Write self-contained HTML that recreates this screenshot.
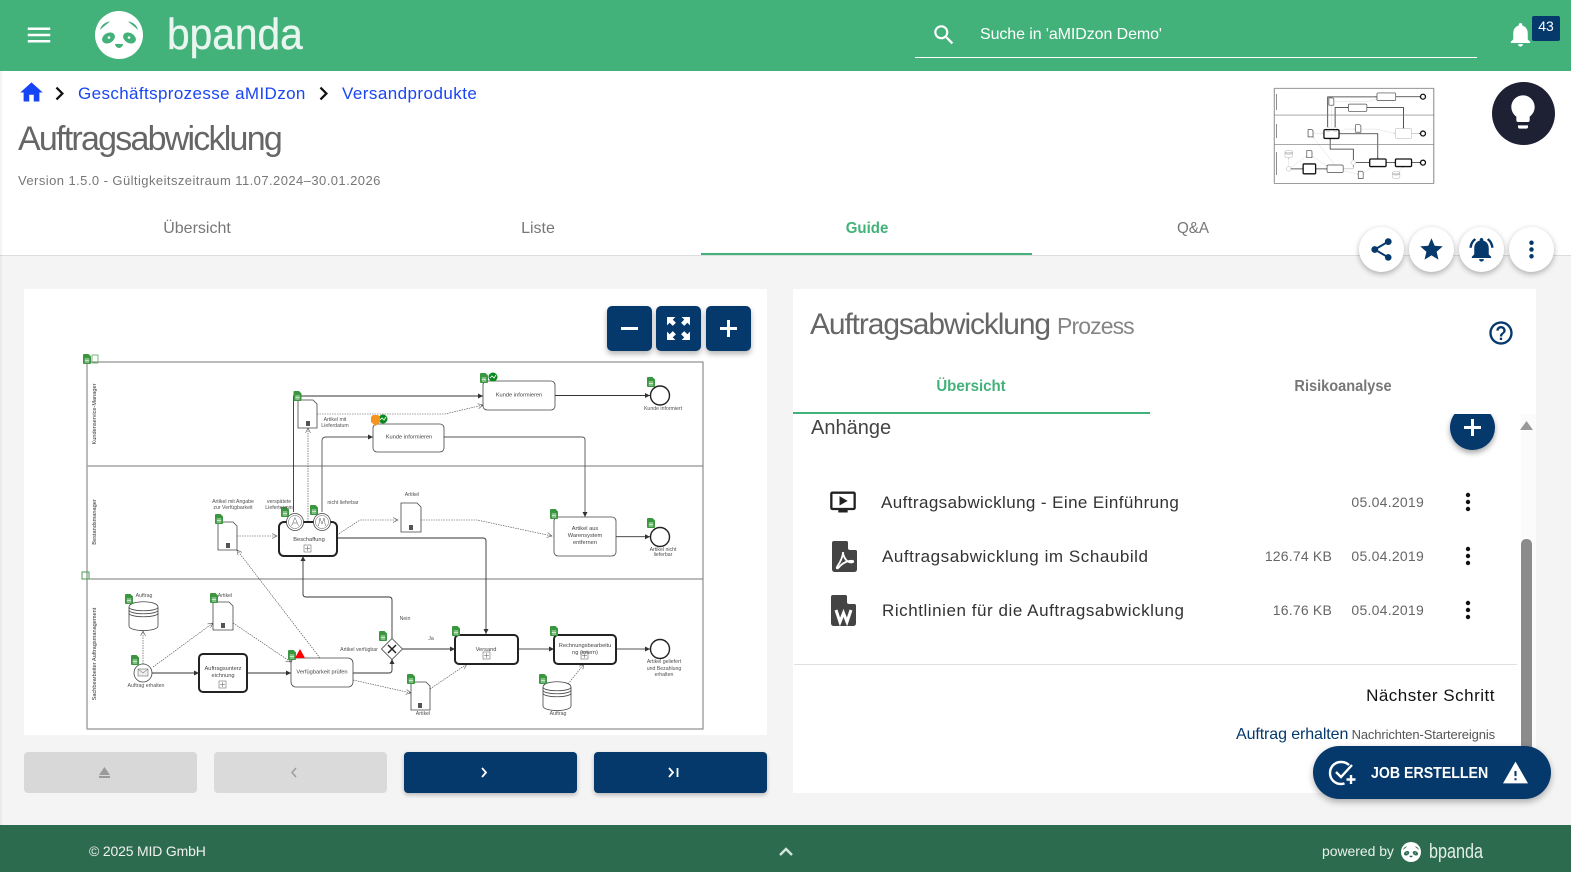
<!DOCTYPE html>
<html lang="de">
<head>
<meta charset="utf-8">
<title>Auftragsabwicklung</title>
<style>
html,body{margin:0;padding:0;width:1571px;height:872px;overflow:hidden;background:#f4f4f4;font-family:"Liberation Sans",sans-serif}
.a{position:absolute}
.t{position:absolute;white-space:nowrap}
.c{transform:translateX(-50%)}
.r{transform:translateX(-100%)}
svg{display:block}
.ic{position:absolute}
.navy{fill:#05386b}
.zb{position:absolute;top:306px;width:45px;height:45px;background:#05386b;border-radius:5px;box-shadow:0 3px 6px rgba(0,0,0,.3)}
.rb{position:absolute;top:227px;width:45px;height:45px;border-radius:50%;background:#fff;box-shadow:0 2px 6px rgba(0,0,0,.3)}
.nb{position:absolute;top:752px;width:173px;height:41px;border-radius:4px}
.row{font-size:17px;color:#333;line-height:22px}
.meta{font-size:14px;color:#666;line-height:20px}
#dg text{font-family:"Liberation Sans",sans-serif;font-size:5.2px;fill:#505050;text-anchor:middle}
#dg text.b{font-size:5.7px;fill:#444}
#dg text.l{font-size:5.6px;fill:#333}
.ns{vector-effect:non-scaling-stroke}
</style>
</head>
<body>
<svg width="0" height="0" style="position:absolute">
<defs>
<symbol id="panda" viewBox="0 0 48 48">
<circle cx="24" cy="24" r="24" fill="#fff"/>
<path d="M5 19C6 14 10 11 15 10.500 12 13 8 16 5 19ZM43 19C42 14 38 11 33 10.500 36 13 40 16 43 19Z" fill="currentColor"/>
<ellipse cx="13.500" cy="27" rx="6.800" ry="5" transform="rotate(-30 13.500 27)" fill="currentColor"/>
<ellipse cx="34.500" cy="27" rx="6.800" ry="5" transform="rotate(30 34.500 27)" fill="currentColor"/>
<circle cx="14" cy="26.500" r="1.300" fill="#fff"/><circle cx="34" cy="26.500" r="1.300" fill="#fff"/>
<path d="M20 33h8c0 2-2 4-4 4s-4-2-4-4z" fill="currentColor"/>
</symbol>
<symbol id="gd" viewBox="0 0 8 10">
<path d="M1 0H5.500L8 2.500V9Q8 10 7 10H1Q0 10 0 9V1Q0 0 1 0Z" fill="#3b973f"/>
<path d="M1.800 5H6.200M1.800 6.500H6.200M1.800 8H6.200" stroke="#fff" stroke-width=".8"/>
</symbol>
<marker id="ar" markerWidth="6" markerHeight="6" refX="5" refY="2.500" orient="auto" markerUnits="userSpaceOnUse"><path d="M0 0L5 2.500 0 5Z" fill="#333"/></marker>
<marker id="ao" markerWidth="6" markerHeight="6" refX="5" refY="2.500" orient="auto" markerUnits="userSpaceOnUse"><path d="M0 0L5 2.500 0 5" fill="none" stroke="#555" stroke-width=".6"/></marker>
<g id="shapes" fill="none" stroke="#333">
<rect x="87" y="362" width="616" height="367" stroke="#777" stroke-width="1"/>
<path d="M87 466H703M87 579H703" stroke="#777" stroke-width="1"/>
<path d="M87 362V729" stroke="#aaa" stroke-width="1.600"/>
<g stroke-width=".9" fill="none">
<path d="M293.500 512V396H483" marker-end="url(#ar)"/>
<path d="M322 512V441Q322 437 326 437H373" marker-end="url(#ar)" stroke="#555"/>
<path d="M555 395.500H650" marker-end="url(#ar)"/>
<path d="M444 437H582Q585 437 585 440V517" marker-end="url(#ar)" stroke="#555"/>
<path d="M616 536.700H650" marker-end="url(#ar)"/>
<path d="M337 538H483Q486 538 486 541V634" marker-end="url(#ar)"/>
<path d="M152 673H199" marker-end="url(#ar)"/>
<path d="M247 673H291" marker-end="url(#ar)"/>
<path d="M353 673H389Q392 673 392 670V659" marker-end="url(#ar)"/>
<path d="M392 639V600Q392 597 389 597H306Q303 597 303 594V556" marker-end="url(#ar)"/>
<path d="M402 649H455" marker-end="url(#ar)"/>
<path d="M518 649H554" marker-end="url(#ar)" stroke="#555"/>
<path d="M616 649H650" marker-end="url(#ar)" stroke="#555"/>
</g>
<g stroke-width=".6" stroke="#444" stroke-dasharray="1.500 1" fill="none">
<path d="M317 414H445L483 405" marker-end="url(#ao)"/>
<path d="M308 522V428" marker-end="url(#ao)"/>
<path d="M237 536H277" marker-end="url(#ao)"/>
<path d="M337 535L360 520H398" marker-end="url(#ao)"/>
<path d="M421 520H477L552 536" marker-end="url(#ao)"/>
<path d="M143 664V631" marker-end="url(#ao)"/>
<path d="M153 667L213 623" marker-end="url(#ao)"/>
<path d="M233 623L291 662" marker-end="url(#ao)"/>
<path d="M320 658L237 550" marker-end="url(#ao)"/>
<path d="M353 680L411 693" marker-end="url(#ao)"/>
<path d="M430 689L467 664" marker-end="url(#ao)"/>
<path d="M568 684L584 664" marker-end="url(#ao)"/>
</g>
<g fill="#fff" stroke="#444" stroke-width=".8">
<rect x="483" y="381" width="72" height="29" rx="4"/>
<rect x="373" y="424" width="71" height="28" rx="4"/>
<rect x="554" y="517" width="62" height="39" rx="4"/>
<rect x="291" y="658" width="62" height="29" rx="5"/>
</g>
<g fill="#fff" stroke="#222" stroke-width="2">
<rect x="279" y="522" width="58" height="34" rx="5"/>
<rect x="199" y="654" width="48" height="38" rx="4"/>
<rect x="455" y="635" width="63" height="29" rx="4"/>
<rect x="554" y="635" width="62" height="29" rx="4"/>
</g>
<g fill="#fff" stroke="#222" stroke-width="1.400">
<circle cx="660" cy="395.500" r="9.500"/><circle cx="660" cy="537" r="9.500"/><circle cx="660" cy="649" r="9.500"/>
</g>
<g fill="#fff" stroke="#444" stroke-width=".8">
<path id="d1" d="M298 400H313L317 404V428H298Z"/>
<path d="M218 522H233L237 526V550H218Z"/>
<path d="M401 503H417L421 507V532H401Z"/>
<path d="M213 602H229L233 606V630H213Z"/>
<path d="M411 682H426L430 686V710H411Z"/>
<circle cx="143" cy="673" r="9"/>
<path d="M392 638.500L402.500 649 392 659.500 381.500 649Z"/>
<circle cx="295" cy="522" r="8.500"/><circle cx="322" cy="522" r="8.500"/>
<path d="M129 607C129 600 158 600 158 607V626C158 632 129 632 129 626Z"/>
<path d="M129 607C129 612 158 612 158 607M129 610C129 615 158 615 158 610M129 613C129 618 158 618 158 613" fill="none"/>
<path d="M543 687C543 680 571 680 571 687V706C571 712 543 712 543 706Z"/>
<path d="M543 687C543 692 571 692 571 687M543 690C543 695 571 695 571 690M543 693C543 698 571 698 571 693" fill="none"/>
</g>
</g>
</defs>
</svg>

<!-- Header -->
<div class="a" style="left:0;top:0;width:1571px;height:71px;background:#43b27a"></div>
<svg class="ic" style="left:24px;top:21px" width="30" height="28" viewBox="0 0 24 22"><path d="M3 18h18v-2H3v2zm0-5h18v-2H3v2zm0-7v2h18V6H3z" fill="#fff" transform="translate(0 -1)"/></svg>
<svg class="ic" style="left:94.500px;top:11px;color:#43b27a" width="48" height="48"><use href="#panda"/></svg>
<div class="t" style="left:167px;top:10px;font-size:44px;line-height:50px;color:#e9f6ef;transform:scaleX(.925);transform-origin:0 0;-webkit-text-stroke:.4px #e9f6ef">bpanda</div>
<svg class="ic" style="left:931px;top:22px" width="26" height="26" viewBox="0 0 24 24"><path fill="#fff" d="M15.500 14h-.79l-.28-.27C15.410 12.590 16 11.110 16 9.500 16 5.910 13.090 3 9.500 3S3 5.910 3 9.500 5.910 16 9.500 16c1.610 0 3.090-.59 4.230-1.570l.27.28v.79l5 4.990L20.490 19l-4.990-5zm-6 0C7.010 14 5 11.990 5 9.500S7.010 5 9.500 5 14 7.010 14 9.500 11.990 14 9.500 14z"/></svg>
<div class="t" style="left:980px;top:25px;font-size:16px;line-height:20px;color:#fff;letter-spacing:-.09px">Suche in 'aMIDzon Demo'</div>
<div class="a" style="left:915px;top:57px;width:562px;height:1px;background:#fff"></div>
<svg class="ic" style="left:1506px;top:20px" width="29" height="29" viewBox="0 0 24 24"><path fill="#fff" d="M12 22c1.100 0 2-.9 2-2h-4c0 1.100.89 2 2 2zm6-6v-5c0-3.070-1.640-5.640-4.500-6.320V4c0-.83-.67-1.500-1.500-1.500s-1.500.67-1.500 1.500v.68C7.630 5.360 6 7.920 6 11v5l-2 2v1h16v-1l-2-2z"/></svg>
<div class="a" style="left:1532px;top:16px;width:28px;height:25px;background:#05386b;border-radius:2px;color:#fff;font-size:14px;line-height:21px;text-align:center">43</div>

<!-- Page head -->
<div class="a" style="left:0;top:71px;width:1571px;height:184px;background:#fff"></div>
<div class="a" style="left:0;top:255px;width:1571px;height:1px;background:#ddd"></div>
<svg class="ic" style="left:18px;top:79px" width="27" height="27" viewBox="0 0 24 24"><path fill="#1544f5" d="M10 20v-6h4v6h5v-8h3L12 3 2 12h3v8z"/></svg>
<svg class="ic" style="left:46px;top:80px" width="27" height="27" viewBox="0 0 24 24"><path fill="#111" d="M10 6L8.590 7.410 13.170 12l-4.580 4.590L10 18l6-6z"/></svg>
<div class="t" style="left:78px;top:83px;font-size:17px;line-height:22px;color:#1a46f2;letter-spacing:.38px">Geschäftsprozesse aMIDzon</div>
<svg class="ic" style="left:310px;top:80px" width="27" height="27" viewBox="0 0 24 24"><path fill="#111" d="M10 6L8.590 7.410 13.170 12l-4.580 4.590L10 18l6-6z"/></svg>
<div class="t" style="left:342px;top:83px;font-size:17px;line-height:22px;color:#1a46f2;letter-spacing:.45px">Versandprodukte</div>
<div class="t" style="left:18px;top:118px;font-size:34px;line-height:42px;color:#666;letter-spacing:-1.770px">Auftragsabwicklung</div>
<div class="t" style="left:18px;top:172px;font-size:13px;line-height:18px;color:#777;letter-spacing:.435px">Version 1.5.0 - Gültigkeitszeitraum 11.07.2024–30.01.2026</div>

<div class="t c" style="left:197px;top:219px;font-size:16px;line-height:20px;color:#777">Übersicht</div>
<div class="t c" style="left:538px;top:219px;font-size:16px;line-height:20px;color:#777">Liste</div>
<div class="t c" style="left:867px;top:219px;font-size:16px;line-height:20px;color:#43b27a;font-weight:bold;transform:translateX(-50%) scaleX(.94)">Guide</div>
<div class="t c" style="left:1193px;top:219px;font-size:16px;line-height:20px;color:#777;transform:translateX(-50%) scaleX(.95)">Q&amp;A</div>
<div class="a" style="left:701px;top:253px;width:331px;height:2px;background:#43b27a"></div>
<div class="a" style="left:0;top:71px;width:3px;height:754px;background:linear-gradient(90deg,rgba(0,0,0,.06),rgba(0,0,0,0))"></div>

<!-- Bulb -->
<div class="a" style="left:1491.500px;top:82px;width:63px;height:63px;border-radius:50%;background:#1e2033"></div>
<svg class="ic" style="left:1503px;top:92px" width="40" height="40" viewBox="0 0 24 24"><path fill="#fff" d="M9 21c0 .55.450 1 1 1h4c.55 0 1-.45 1-1v-1H9v1zm3-19C8.140 2 5 5.140 5 9c0 2.380 1.190 4.470 3 5.740V17c0 .55.450 1 1 1h6c.55 0 1-.45 1-1v-2.260c1.810-1.270 3-3.360 3-5.740 0-3.860-3.140-7-7-7z"/></svg>

<!-- Right round buttons -->
<div class="rb" style="left:1359px"><svg style="margin:9px" width="27" height="27" viewBox="0 0 24 24"><path class="navy" d="M18 16.080c-.76 0-1.440.3-1.960.77L8.910 12.700c.05-.23.09-.46.09-.7s-.04-.47-.09-.7l7.050-4.110c.54.5 1.250.81 2.040.81 1.660 0 3-1.340 3-3s-1.340-3-3-3-3 1.340-3 3c0 .24.04.47.09.7L8.040 9.810C7.500 9.310 6.790 9 6 9c-1.660 0-3 1.340-3 3s1.340 3 3 3c.79 0 1.500-.31 2.040-.81l7.120 4.160c-.05.21-.08.43-.08.65 0 1.610 1.310 2.920 2.920 2.920 1.610 0 2.920-1.310 2.920-2.920s-1.310-2.920-2.920-2.920z"/></svg></div>
<div class="rb" style="left:1409px"><svg style="margin:9px" width="27" height="27" viewBox="0 0 24 24"><path class="navy" d="M12 17.270L18.180 21l-1.640-7.030L22 9.240l-7.190-.61L12 2 9.190 8.630 2 9.240l5.460 4.730L5.820 21z"/></svg></div>
<div class="rb" style="left:1459px"><svg style="margin:8px" width="29" height="29" viewBox="0 0 24 24"><path class="navy" d="M7.580 4.080L6.150 2.650C3.750 4.480 2.170 7.300 2.030 10.500h2c.15-2.650 1.510-4.970 3.550-6.420zm12.390 6.420h2c-.15-3.200-1.730-6.020-4.120-7.850l-1.420 1.430c2.020 1.450 3.390 3.770 3.540 6.420zM18 11c0-3.070-1.640-5.640-4.500-6.320V4c0-.83-.67-1.500-1.500-1.500s-1.500.67-1.500 1.500v.68C7.630 5.360 6 7.920 6 11v5l-2 2v1h16v-1l-2-2v-5zm-6 11c.14 0 .27-.01.4-.04.65-.14 1.180-.58 1.440-1.180.1-.24.15-.5.15-.78h-4c.01 1.100.9 2 2.010 2z"/></svg></div>
<div class="rb" style="left:1509px"><svg style="margin:9px" width="27" height="27" viewBox="0 0 24 24"><path class="navy" d="M12 8c1.100 0 2-.9 2-2s-.9-2-2-2-2 .9-2 2 .9 2 2 2zm0 2c-1.100 0-2 .9-2 2s.9 2 2 2 2-.9 2-2-.9-2-2-2zm0 6c-1.100 0-2 .9-2 2s.9 2 2 2 2-.9 2-2-.9-2-2-2z"/></svg></div>

<!-- Panels -->
<div class="a" style="left:24px;top:289px;width:743px;height:446px;background:#fff"></div>
<div class="a" style="left:793px;top:289px;width:743px;height:504px;background:#fff"></div>

<!-- Diagram + thumbnail -->
<svg id="dg" class="a" style="left:0;top:0" width="1571" height="872" viewBox="0 0 1571 872">
<use href="#shapes"/>
<g fill="#fff" stroke="#555" stroke-width=".5">
<circle cx="295" cy="522" r="6.500"/><circle cx="322" cy="522" r="6.500"/>
<path d="M291.500 526L295 517.500 298.500 526M293 523H297M318.500 526L320 518 322 524 324 518 325.500 526" fill="none"/>
<rect x="138" y="669" width="10" height="7" fill="#eee"/>
<path d="M138 669L143 673 148 669" fill="none"/>
<rect x="304" y="545" width="7" height="7"/><path d="M307.500 546V551M305 548.500H310"/>
<rect x="219" y="681" width="7" height="7"/><path d="M222.500 682V687M220 684.500H225"/>
<rect x="483" y="652" width="7" height="7"/><path d="M486.500 653V658M484 655.500H489"/>
<rect x="581" y="652" width="7" height="7"/><path d="M584.500 653V658M582 655.500H587"/>
</g>
<path d="M388 645L396 653M396 645L388 653" stroke="#222" stroke-width="1.500"/>
<g fill="#555"><rect x="306" y="421" width="4" height="5"/><rect x="226" y="543" width="4" height="5"/><rect x="409" y="525" width="4" height="5"/><rect x="221" y="623" width="4" height="5"/><rect x="418" y="703" width="4" height="5"/></g>
<g>
<use href="#gd" x="83" y="354" width="8" height="10"/>
<use href="#gd" x="293.500" y="391" width="8" height="10"/>
<use href="#gd" x="480" y="373" width="8" height="10"/>
<use href="#gd" x="647" y="377" width="8" height="10"/>
<use href="#gd" x="550" y="509" width="8" height="10"/>
<use href="#gd" x="647" y="518" width="8" height="10"/>
<use href="#gd" x="281" y="507" width="8" height="10"/>
<use href="#gd" x="215" y="514" width="8" height="10"/>
<use href="#gd" x="310" y="505" width="8" height="10"/>
<use href="#gd" x="125" y="594" width="8" height="10"/>
<use href="#gd" x="210" y="593" width="8" height="10"/>
<use href="#gd" x="131" y="655" width="8" height="10"/>
<use href="#gd" x="288" y="650" width="8" height="10"/>
<use href="#gd" x="379" y="631" width="8" height="10"/>
<use href="#gd" x="452" y="626" width="8" height="10"/>
<use href="#gd" x="550" y="626" width="8" height="10"/>
<use href="#gd" x="407" y="674" width="8" height="10"/>
<use href="#gd" x="539" y="674" width="8" height="10"/>
</g>
<path d="M92 355H98V363H92Z" fill="none" stroke="#7bb97e" stroke-width="1"/>
<path d="M82 572H89V579H82Z" fill="none" stroke="#4a9c4e" stroke-width="1"/>
<circle cx="493" cy="377" r="4.500" fill="#0a8a1e"/><path d="M490 378L492 376 494 378 496 375" stroke="#fff" stroke-width=".8" fill="none"/>
<circle cx="383" cy="419" r="4.500" fill="#0a8a1e"/><path d="M380 420L382 418 384 420 386 417" stroke="#fff" stroke-width=".8" fill="none"/>
<path d="M373 415H378L380 417V422L375.500 426 371 422V417Z" fill="#f7941d"/>
<path d="M300 649L305 658H295Z" fill="#f00"/>
<text class="b" x="519" y="396.500">Kunde informieren</text>
<text class="b" x="409" y="438.500">Kunde informieren</text>
<text x="663" y="410">Kunde informiert</text>
<text x="335" y="421">Artikel mit</text><text x="335" y="427">Lieferdatum</text>
<text x="233" y="503">Artikel mit Angabe</text><text x="233" y="509">zur Verfügbarkeit</text>
<text x="279" y="503">verspätete</text><text x="279" y="509">Liefertermin</text>
<text x="343" y="504">nicht lieferbar</text>
<text x="412" y="496">Artikel</text>
<text class="b" x="309" y="541">Beschaffung</text>
<text class="b" x="585" y="530">Artikel aus</text><text class="b" x="585" y="537">Warensystem</text><text class="b" x="585" y="544">entfernen</text>
<text x="663" y="551">Artikel nicht</text><text x="663" y="556">lieferbar</text>
<text x="144" y="597">Auftrag</text><text x="225" y="597">Artikel</text>
<text x="146" y="687">Auftrag erhalten</text>
<text class="b" x="223" y="670">Auftragsunterz</text><text class="b" x="223" y="677">eichnung</text>
<text class="b" x="322" y="673.500">Verfügbarkeit prüfen</text>
<text x="359" y="651">Artikel verfügbar</text>
<text x="405" y="620">Nein</text><text x="431" y="640">Ja</text>
<text class="b" x="486" y="651">Versand</text>
<text class="b" x="585" y="647">Rechnungsbearbeitu</text><text class="b" x="585" y="654">ng (intern)</text>
<text x="664" y="663">Artikel geliefert</text><text x="664" y="670">und Bezahlung</text><text x="664" y="676">erhalten</text>
<text x="423" y="715">Artikel</text><text x="558" y="715">Auftrag</text>
<text class="l" transform="translate(96 414) rotate(-90)">Kundenservice-Manager</text>
<text class="l" transform="translate(96 522) rotate(-90)">Bestandsmanager</text>
<text class="l" transform="translate(96 654) rotate(-90)">Sachbearbeiter Auftragsmanagement</text>
<!-- thumbnail -->
<rect x="1274.500" y="88.500" width="159" height="95" fill="#fff" stroke="#aaa"/>
<g transform="translate(1251.400 -6.100) scale(.26)"><use href="#shapes"/>
<g fill="none" stroke="#333" stroke-width=".8">
<path class="ns" d="M293.500 512V396H483M322 512V437H373M555 395.500H650M444 437H585V517M337 538H486V634M152 673H199M247 673H291M392 639V597H303V556M402 649H455M518 649H554M616 649H650"/>
<path class="ns" d="M87 466H703M87 579H703" stroke="#888" stroke-width=".7"/>
</g>
<g fill="none" stroke="#111" stroke-width="1.300">
<rect class="ns" x="279" y="522" width="58" height="34" rx="5"/>
<rect class="ns" x="199" y="654" width="48" height="38" rx="4"/>
<rect class="ns" x="455" y="635" width="63" height="29" rx="4"/>
<rect class="ns" x="554" y="635" width="62" height="29" rx="4"/>
<circle class="ns" cx="660" cy="395.500" r="9.500"/><circle class="ns" cx="660" cy="537" r="9.500"/><circle class="ns" cx="660" cy="649" r="9.500"/>
</g>
<g fill="none" stroke="#555" stroke-width=".7">
<rect class="ns" x="483" y="381" width="72" height="29" rx="4"/>
<rect class="ns" x="373" y="424" width="71" height="28" rx="4"/>
<rect class="ns" x="291" y="658" width="62" height="29" rx="5"/>
<path class="ns" d="M298 400H313L317 404V428H298ZM218 522H233L237 526V550H218ZM401 503H417L421 507V532H401ZM213 602H229L233 606V630H213ZM411 682H426L430 686V710H411Z"/>
</g>
</g>
<path d="M1276.500 94V110M1276.500 124V138M1276.500 152V175" stroke="#444" stroke-width=".6"/>
</svg>

<!-- Zoom buttons -->
<div class="zb" style="left:607px"><div class="a" style="left:14px;top:21px;width:17px;height:3px;background:#fff"></div></div>
<div class="zb" style="left:656px"><svg style="margin:10px" width="25" height="25" viewBox="0 0 24 24"><path fill="#fff" d="M1 1H9L6.500 3.500 9.500 6.500 6.500 9.500 3.500 6.500 1 9ZM23 1V9L20.500 6.500 17.500 9.500 14.500 6.500 17.500 3.500 15 1ZM1 23V15L3.500 17.500 6.500 14.500 9.500 17.500 6.500 20.500 9 23ZM23 23H15L17.500 20.500 14.500 17.500 17.500 14.500 20.500 17.500 23 15Z"/></svg></div>
<div class="zb" style="left:706px"><div class="a" style="left:14px;top:21px;width:17px;height:3px;background:#fff"></div><div class="a" style="left:21px;top:14px;width:3px;height:17px;background:#fff"></div></div>

<!-- Nav buttons -->
<div class="nb" style="left:24px;background:#d8d8d8"><svg class="a" style="left:74px;top:14px" width="13" height="13" viewBox="0 0 13 13"><path fill="#9a9a9a" d="M6.500 1L12 9H1ZM1 10H12V12H1Z"/></svg></div>
<div class="nb" style="left:214px;background:#dadada"><svg class="a" style="left:75px;top:14px" width="10" height="13" viewBox="0 0 10 13"><path fill="none" stroke="#999" stroke-width="1.400" d="M7 2L3 6.500 7 11"/></svg></div>
<div class="nb" style="left:404px;background:#05386b;box-shadow:0 2px 4px rgba(0,0,0,.25)"><svg class="a" style="left:75px;top:14px" width="10" height="13" viewBox="0 0 10 13"><path fill="none" stroke="#fff" stroke-width="1.800" d="M3 2L7 6.500 3 11"/></svg></div>
<div class="nb" style="left:594px;background:#05386b;box-shadow:0 2px 4px rgba(0,0,0,.25)"><svg class="a" style="left:73px;top:14px" width="14" height="13" viewBox="0 0 14 13"><path fill="none" stroke="#fff" stroke-width="1.800" d="M2 2L6 6.500 2 11M10.500 2V11"/></svg></div>

<!-- Right panel content -->
<div class="t" style="left:810px;top:306px;font-size:30px;line-height:38px;color:#666;letter-spacing:-1.120px">Auftragsabwicklung</div>
<div class="t" style="left:1057px;top:311px;font-size:23px;line-height:30px;color:#858585;letter-spacing:-.9px">Prozess</div>
<svg class="ic" style="left:1487px;top:319px" width="28" height="28" viewBox="0 0 24 24"><path class="navy" d="M11 18h2v-2h-2v2zm1-16C6.480 2 2 6.480 2 12s4.480 10 10 10 10-4.480 10-10S17.520 2 12 2zm0 18c-4.410 0-8-3.590-8-8s3.590-8 8-8 8 3.590 8 8-3.590 8-8 8zm0-14c-2.210 0-4 1.790-4 4h2c0-1.100.9-2 2-2s2 .9 2 2c0 2-3 1.750-3 5h2c0-2.250 3-2.500 3-5 0-2.210-1.790-4-4-4z"/></svg>
<div class="t c" style="left:971px;top:377px;font-size:16px;line-height:20px;color:#43b27a;font-weight:bold;transform:translateX(-50%) scaleX(.94)">Übersicht</div>
<div class="t c" style="left:1343px;top:377px;font-size:16px;line-height:20px;color:#777;font-weight:bold;transform:translateX(-50%) scaleX(.91)">Risikoanalyse</div>
<div class="a" style="left:793px;top:412px;width:357px;height:2px;background:#43b27a"></div>

<!-- scroll area clip -->
<div class="a" style="left:794px;top:414px;width:742px;height:379px;overflow:hidden">
  <div class="a" style="left:656px;top:-9.500px;width:45px;height:45px;border-radius:50%;background:#05386b;box-shadow:0 3px 6px rgba(0,0,0,.35)"></div>
  <div class="a" style="left:670px;top:11.500px;width:17px;height:3px;background:#fff"></div>
  <div class="a" style="left:677px;top:4.500px;width:3px;height:17px;background:#fff"></div>
</div>
<div class="a" style="left:1521px;top:414px;width:15px;height:379px;background:#fbfbfb"></div>
<svg class="ic" style="left:1519px;top:420px" width="15" height="11" viewBox="0 0 15 11"><path d="M7.500 1L14 10H1Z" fill="#999"/></svg>
<div class="a" style="left:1521px;top:539px;width:11px;height:220px;border-radius:5px 5px 0 0;background:#8b8b8b"></div>

<div class="t" style="left:811px;top:416px;font-size:20px;line-height:24px;color:#444">Anhänge</div>

<svg class="ic" style="left:829px;top:488px" width="28" height="28" viewBox="0 0 24 24"><path fill="#222" d="M21 3H3c-1.110 0-2 .89-2 2v12c0 1.100.89 2 2 2h5v2h8v-2h5c1.100 0 1.990-.9 1.990-2L23 5c0-1.110-.9-2-2-2zm0 14H3V5h18v12zM16 11l-7 4V7z"/></svg>
<div class="t row" style="left:881px;top:492px;letter-spacing:.41px">Auftragsabwicklung - Eine Einführung</div>
<div class="t meta r" style="left:1424px;top:492px;letter-spacing:.25px">05.04.2019</div>
<svg class="ic" style="left:1455px;top:490px" width="26" height="24" viewBox="0 0 26 24"><circle cx="13" cy="5" r="2.200" fill="#111"/><circle cx="13" cy="12" r="2.200" fill="#111"/><circle cx="13" cy="19" r="2.200" fill="#111"/></svg>

<svg class="ic" style="left:832px;top:541px" width="25" height="31" viewBox="0 0 25 31"><path fill="#444" d="M2 0H15L25 10V28Q25 31 22 31H3Q0 31 0 28V2Q0 0 2 0Z"/><path fill="#fff" d="M16 0L25 9H18Q16 9 16 7Z"/><path fill="none" stroke="#fff" stroke-width="1.800" d="M11 11C11 15 9 20 5 26 4 28 6 28 8 25 11 22 16 19 21 20 22 21 20 22 17 21 14 20 11 15 11 11Z"/></svg>
<div class="t row" style="left:882px;top:546px;letter-spacing:.55px">Auftragsabwicklung im Schaubild</div>
<div class="t meta r" style="left:1332px;top:546px;letter-spacing:.2px">126.74 KB</div>
<div class="t meta r" style="left:1424px;top:546px;letter-spacing:.25px">05.04.2019</div>
<svg class="ic" style="left:1455px;top:544px" width="26" height="24" viewBox="0 0 26 24"><circle cx="13" cy="5" r="2.200" fill="#111"/><circle cx="13" cy="12" r="2.200" fill="#111"/><circle cx="13" cy="19" r="2.200" fill="#111"/></svg>

<svg class="ic" style="left:831px;top:595px" width="25" height="31" viewBox="0 0 25 31"><path fill="#444" d="M2 0H15L25 10V28Q25 31 22 31H3Q0 31 0 28V2Q0 0 2 0Z"/><path fill="#fff" d="M16 0L25 9H18Q16 9 16 7Z"/><path fill="none" stroke="#fff" stroke-width="3" d="M5 15L9 27 12.500 18 16 27 20 15"/></svg>
<div class="t row" style="left:882px;top:600px;letter-spacing:.55px">Richtlinien für die Auftragsabwicklung</div>
<div class="t meta r" style="left:1332px;top:600px;letter-spacing:.2px">16.76 KB</div>
<div class="t meta r" style="left:1424px;top:600px;letter-spacing:.25px">05.04.2019</div>
<svg class="ic" style="left:1455px;top:598px" width="26" height="24" viewBox="0 0 26 24"><circle cx="13" cy="5" r="2.200" fill="#111"/><circle cx="13" cy="12" r="2.200" fill="#111"/><circle cx="13" cy="19" r="2.200" fill="#111"/></svg>

<div class="a" style="left:794px;top:664px;width:723px;height:1px;background:#e0e0e0"></div>
<div class="t r" style="left:1495px;top:685px;font-size:17px;line-height:22px;color:#111;letter-spacing:.5px">Nächster Schritt</div>
<div class="t" style="left:1236px;top:725px;font-size:16px;line-height:20px;color:#05386b;letter-spacing:-.1px">Auftrag erhalten</div>
<div class="t r" style="left:1495px;top:726px;font-size:13px;line-height:18px;color:#555;letter-spacing:-.13px">Nachrichten-Startereignis</div>

<!-- Job button -->
<div class="a" style="left:1313px;top:746px;width:238px;height:53px;border-radius:27px;background:#05386b;box-shadow:0 3px 7px rgba(0,0,0,.3)"></div>
<svg class="ic" style="left:1328px;top:760px" width="28" height="26" viewBox="0 0 28 26"><path fill="none" stroke="#fff" stroke-width="2.400" d="M21 5C18.500 2.500 16 2 13 2 6.500 2 2 7 2 13S6.500 24 13 24C14.500 24 15.500 23.800 16.500 23.300M8 12L13 17 24 5"/><path stroke="#fff" stroke-width="2.400" d="M23 15V24M18.500 19.500H27.500"/></svg>
<div class="t" style="left:1371px;top:764px;font-size:16px;line-height:20px;font-weight:bold;color:#fff;transform:scaleX(.885);transform-origin:0 0">JOB ERSTELLEN</div>
<svg class="ic" style="left:1503px;top:761px" width="25" height="23" viewBox="0 0 24 22"><path fill="#fff" d="M0 21.500h24L12 .5 0 21.500zm13-3h-2v-2h2v2zm0-4h-2v-5h2v5z"/></svg>

<!-- Footer -->
<div class="a" style="left:0;top:825px;width:1571px;height:47px;background:#2d6b4f"></div>
<div class="t" style="left:89px;top:842px;font-size:14px;line-height:18px;color:#f0f0f0;letter-spacing:-.17px">© 2025 MID GmbH</div>
<svg class="ic" style="left:778px;top:845px" width="16" height="12" viewBox="0 0 16 12"><path fill="none" stroke="#d5e5dc" stroke-width="2.400" d="M2 10L8 4 14 10"/></svg>
<div class="t" style="left:1322px;top:842px;font-size:14px;line-height:18px;color:#e8f0ec;letter-spacing:-.05px">powered by</div>
<svg class="ic" style="left:1401px;top:842px;color:#2d6b4f" width="20" height="20"><use href="#panda"/></svg>
<div class="t" style="left:1429px;top:840px;font-size:20px;line-height:24px;color:#e4efe9;transform:scaleX(.81);transform-origin:0 0">bpanda</div>
</body>
</html>
